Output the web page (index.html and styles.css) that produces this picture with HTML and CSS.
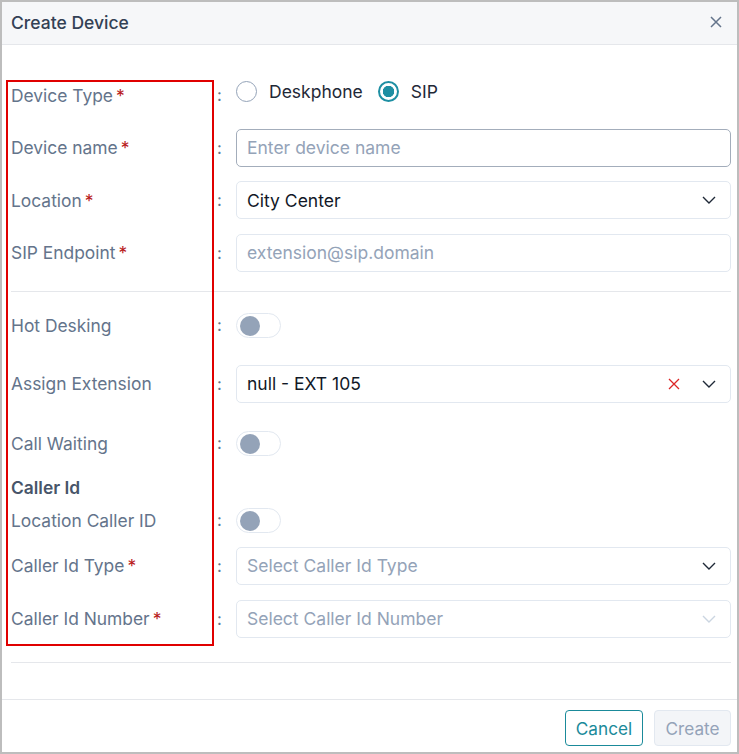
FILE: index.html
```html
<!DOCTYPE html>
<html>
<head>
<meta charset="utf-8">
<title>Create Device</title>
<link rel="stylesheet" href="styles.css">
</head>
<body>
  <div class="dialog">
    <div class="dialog-header">
      <span class="dialog-title">Create Device</span>
      <svg class="close-icon" width="12" height="12" viewBox="0 0 12 12">
        <path d="M1 1l10 10M11 1L1 11" stroke="#64748b" stroke-width="1.5" fill="none"/>
      </svg>
    </div>

    <div class="dialog-body">
      <div class="section section-main">
        <div class="row row-radio">
          <label class="label">Device Type<span class="req">*</span></label>
          <span class="colon">:</span>
          <div class="radio-group">
            <span class="radio"></span><span class="radio-text">Deskphone</span>
            <span class="radio radio-checked"></span><span class="radio-text">SIP</span>
          </div>
        </div>
        <div class="row">
          <label class="label">Device name<span class="req">*</span></label>
          <span class="colon">:</span>
          <div class="field field-focus"><span class="placeholder">Enter device name</span></div>
        </div>
        <div class="row">
          <label class="label">Location<span class="req">*</span></label>
          <span class="colon">:</span>
          <div class="field">
            <span class="value">City Center</span>
            <svg class="chevron" width="14" height="8" viewBox="0 0 14 8"><path d="M1 1l6 6 6-6" stroke="#1f2937" stroke-width="1.4" fill="none"/></svg>
          </div>
        </div>
        <div class="row">
          <label class="label">SIP Endpoint<span class="req">*</span></label>
          <span class="colon">:</span>
          <div class="field"><span class="placeholder">extension@sip.domain</span></div>
        </div>
      </div>

      <div class="section section-extra">
        <div class="row row-toggle">
          <label class="label">Hot Desking</label>
          <span class="colon">:</span>
          <div class="toggle"><span class="knob"></span></div>
        </div>
        <div class="row row-after-toggle">
          <label class="label">Assign Extension</label>
          <span class="colon">:</span>
          <div class="field">
            <span class="value">null - EXT 105</span>
            <svg class="clear" width="12" height="12" viewBox="0 0 12 12"><path d="M1 1l10 10M11 1L1 11" stroke="#dc2626" stroke-width="1.3" fill="none"/></svg>
            <svg class="chevron" width="14" height="8" viewBox="0 0 14 8"><path d="M1 1l6 6 6-6" stroke="#1f2937" stroke-width="1.4" fill="none"/></svg>
          </div>
        </div>
        <div class="row row-toggle row-after-field">
          <label class="label">Call Waiting</label>
          <span class="colon">:</span>
          <div class="toggle"><span class="knob"></span></div>
        </div>

        <div class="group-title">Caller Id</div>
        <div class="row row-toggle row-first">
          <label class="label">Location Caller ID</label>
          <span class="colon">:</span>
          <div class="toggle"><span class="knob"></span></div>
        </div>
        <div class="row">
          <label class="label">Caller Id Type<span class="req">*</span></label>
          <span class="colon">:</span>
          <div class="field">
            <span class="placeholder">Select Caller Id Type</span>
            <svg class="chevron" width="14" height="8" viewBox="0 0 14 8"><path d="M1 1l6 6 6-6" stroke="#1f2937" stroke-width="1.4" fill="none"/></svg>
          </div>
        </div>
        <div class="row">
          <label class="label">Caller Id Number<span class="req">*</span></label>
          <span class="colon">:</span>
          <div class="field">
            <span class="placeholder">Select Caller Id Number</span>
            <svg class="chevron" width="14" height="8" viewBox="0 0 14 8"><path d="M1 1l6 6 6-6" stroke="#cbd5e1" stroke-width="1.4" fill="none"/></svg>
          </div>
        </div>
      </div>
    </div>

    <div class="dialog-footer">
      <button class="btn btn-outline">Cancel</button>
      <button class="btn btn-disabled">Create</button>
    </div>

    <div class="highlight"></div>
  </div>
</body>
</html>
```

FILE: styles.css
```css
* {
  box-sizing: border-box;
}
body {
  margin: 0;
  font-family: Inter, "Noto Sans", sans-serif;
  font-size: 17.5px;
  color: #1f2937;
}
.dialog {
  position: relative;
  width: 739px;
  height: 754px;
  border: 2px solid #bdbdbd;
  background: #fff;
  display: flex;
  flex-direction: column;
}

/* header */
.dialog-header {
  height: 43px;
  background: #f6f7f9;
  border-bottom: 1px solid #e5e7eb;
  display: flex;
  align-items: center;
  justify-content: space-between;
  padding: 0 15px 2px 9px;
}
.dialog-title {
  font-size: 17.5px;
  font-weight: 500;
  color: #334155;
}

/* body */
.dialog-body {
  flex: 1;
  padding: 0 6px 0 9px;
}
.section {
  border-bottom: 1px solid #e5e7eb;
  display: flex;
  flex-direction: column;
}
.section-main {
  padding: 31px 0 19px;
  gap: 14.5px;
}
.section-extra {
  padding: 21px 0 24px;
}
.row {
  display: grid;
  grid-template-columns: 205px 20px 1fr;
  align-items: center;
  height: 38px;
}
.section-extra .row {
  margin-top: 15px;
}
.section-extra .row-toggle {
  height: 24px;
}
.section-extra .row:first-child {
  margin-top: 0;
}
.section-extra .row-after-toggle,
.section-extra .row-after-field {
  margin-top: 28px;
}
.section-extra .row-first {
  margin-top: 10px;
}
.label {
  font-size: 17.4px;
  color: #64748b;
  white-space: nowrap;
}
.req {
  color: #b91c1c;
  margin-left: 3px;
}
.colon {
  font-size: 16.8px;
  color: #64748b;
  padding-left: 1px;
}
.group-title {
  margin-top: 23px;
  height: 20px;
  line-height: 20px;
  font-size: 17.4px;
  font-weight: 600;
  color: #475569;
}

/* radios */
.row-radio .radio-group {
  align-self: start;
  height: 30px;
  display: flex;
  align-items: center;
}
.radio {
  width: 21px;
  height: 21px;
  border: 1px solid #94a3b8;
  border-radius: 50%;
  margin-right: 12px;
}
.radio-checked {
  border: 2px solid #1e8fa3;
  background: radial-gradient(circle, #1e8fa3 0 5.5px, #fff 6px);
}
.radio-text {
  color: #1f2937;
  margin-right: 15px;
}

/* inputs and selects */
.field {
  height: 38px;
  border: 1px solid #e2e8f0;
  border-radius: 5px;
  display: flex;
  align-items: center;
  padding: 0 14px 0 10px;
}
.field-focus {
  border-color: #a3adbb;
}
.placeholder {
  color: #94a3b8;
  flex: 1;
}
.value {
  color: #111827;
  flex: 1;
}
.clear {
  margin-right: 22px;
}

/* toggles */
.toggle {
  width: 45px;
  height: 25px;
  border: 1px solid #e2e8f0;
  border-radius: 13px;
  padding: 2px 3px;
}
.knob {
  display: block;
  width: 20px;
  height: 20px;
  border-radius: 50%;
  background: #94a3b8;
}

/* footer */
.dialog-footer {
  border-top: 1px solid #e5e7eb;
  padding: 10px 6px 6px;
  display: flex;
  justify-content: flex-end;
  gap: 11px;
}
.btn {
  font-family: inherit;
  font-size: 17.2px;
  height: 36px;
  width: 78px;
  border-radius: 4px;
  background: #fff;
}
.btn-outline {
  border: 1px solid #1a8a9a;
  color: #1a8a9a;
}
.btn-disabled {
  width: 77px;
  border: 1px solid #e2e8f0;
  background: #f3f5f8;
  color: #94a3b8;
}

/* annotation box over the label column */
.highlight {
  position: absolute;
  left: 4px;
  top: 78px;
  width: 208px;
  height: 566px;
  border: 2px solid #e00000;
  pointer-events: none;
}
```
